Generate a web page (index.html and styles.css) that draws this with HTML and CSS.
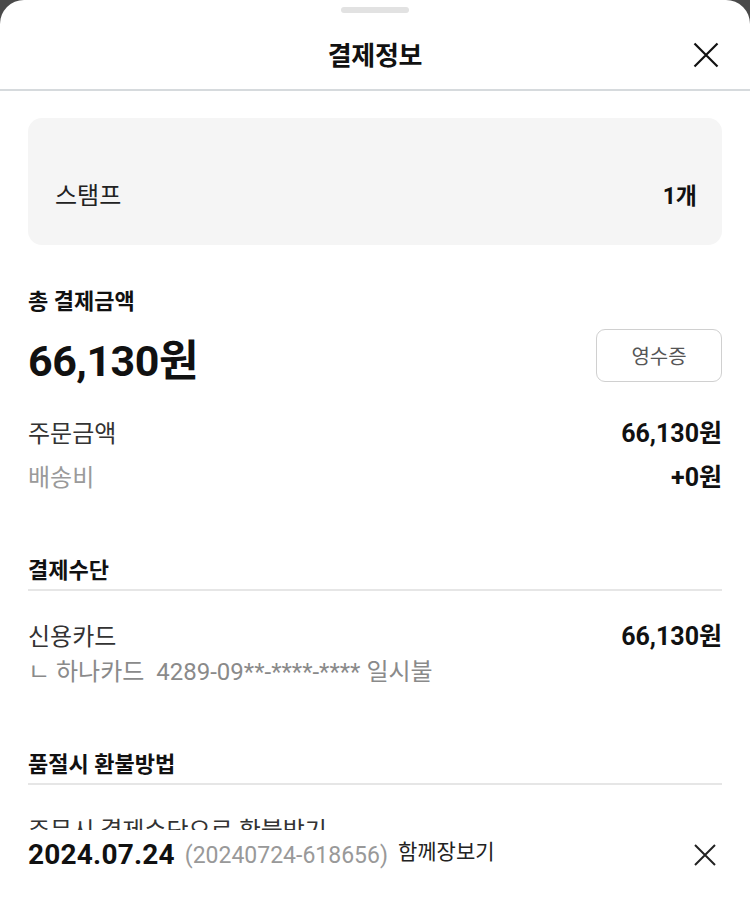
FILE: index.html
```html
<!DOCTYPE html>
<html lang="ko">
<head>
<meta charset="utf-8">
<title>결제정보</title>
<link rel="stylesheet" href="styles.css">
</head>
<body>
<div class="sheet">
  <div class="handle"></div>
  <header class="head">
    <h1 class="title">결제정보</h1>
    <button class="close" aria-label="닫기">
      <svg width="26" height="26" viewBox="0 0 26 26"><path d="M1.5 1.5 L24.5 24.5 M24.5 1.5 L1.5 24.5" stroke="#111" stroke-width="2.2" fill="none"/></svg>
    </button>
  </header>
  <main class="content">
    <div class="stamp">
      <span class="stamp-label">스탬프</span>
      <span class="stamp-value">1개</span>
    </div>

    <div class="total-label">총 결제금액</div>
    <div class="total-row">
      <span class="total-amount">66,130원</span>
      <button class="receipt">영수증</button>
    </div>

    <div class="row row-first">
      <span class="label">주문금액</span>
      <span class="value">66,130원</span>
    </div>
    <div class="row row-next">
      <span class="label muted">배송비</span>
      <span class="value">+0원</span>
    </div>

    <div class="section-title">결제수단</div>
    <div class="row row-section">
      <span class="label">신용카드</span>
      <span class="value">66,130원</span>
    </div>
    <div class="card-line">ㄴ 하나카드&nbsp; 4289-09**-****-**** 일시불</div>

    <div class="section-title">품절시 환불방법</div>
    <div class="row row-section">
      <span class="label">주문시 결제수단으로 환불받기</span>
    </div>
  </main>
  <footer class="foot">
    <div class="foot-text">
      <span class="foot-date">2024.07.24</span>
      <span class="foot-no">(20240724-618656)</span>
      <span class="foot-tag">함께장보기</span>
    </div>
    <button class="foot-close" aria-label="닫기">
      <svg width="24" height="24" viewBox="0 0 24 24"><path d="M2 2 L22 22 M22 2 L2 22" stroke="#222" stroke-width="2" fill="none"/></svg>
    </button>
  </footer>
</div>
</body>
</html>
```

FILE: styles.css
```css
* { box-sizing: border-box; }
html, body { margin: 0; padding: 0; }
body {
  background: #4a4a4a;
  font-family: Roboto, "Noto Sans CJK KR", "Noto Sans", sans-serif;
  color: #111;
}
.sheet {
  width: 750px;
  height: 921px;
  background: #fff;
  border-radius: 24px 24px 0 0;
  overflow: hidden;
  display: flex;
  flex-direction: column;
}
.handle {
  flex: none;
  width: 68px;
  height: 6px;
  border-radius: 3px;
  background: #e2e2e2;
  margin: 7px auto 0;
}
.head {
  flex: none;
  position: relative;
  height: 78px;
  border-bottom: 2px solid #d6dadd;
  display: flex;
  align-items: center;
  justify-content: center;
}
.title {
  margin: 9px 0 0;
  font-size: 26px;
  font-weight: 700;
  line-height: 32px;
  letter-spacing: -0.3px;
}
.close {
  position: absolute;
  right: 31px;
  top: 29px;
  border: 0;
  background: none;
  padding: 0;
  width: 26px;
  height: 26px;
}
.close svg, .foot-close svg { display: block; }
.content {
  flex: 1;
  min-height: 0;
  overflow: hidden;
  padding: 27px 28px 0;
}
.stamp {
  height: 127px;
  background: #f5f5f5;
  border-radius: 14px;
  display: flex;
  align-items: center;
  justify-content: space-between;
  padding: 24px 25px 0 27px;
  font-size: 24px;
}
.stamp-label { color: #222; }
.stamp-value { font-weight: 700; font-size: 23px; }
.total-label {
  margin-top: 43px;
  font-size: 22px;
  line-height: 28px;
  font-weight: 700;
}
.total-row {
  margin-top: 13px;
  display: flex;
  align-items: center;
  justify-content: space-between;
  height: 53px;
}
.total-amount {
  font-size: 43px;
  font-weight: 700;
  letter-spacing: -0.5px;
  margin-top: 2px;
}
.receipt {
  width: 126px;
  height: 53px;
  border: 1.5px solid #d0d0d0;
  border-radius: 9px;
  background: #fff;
  font-family: inherit;
  font-size: 20px;
  color: #555;
}
.row {
  display: flex;
  justify-content: space-between;
  align-items: center;
  height: 32px;
  font-size: 24px;
}
.row-first { margin-top: 33px; }
.row-next { margin-top: 12px; }
.row-section { margin-top: 27px; }
.label { color: #333; }
.muted { color: #9a9a9a; }
.value { font-weight: 700; color: #111; font-size: 25px; }
.section-title {
  margin-top: 66px;
  font-size: 22px;
  line-height: 28px;
  font-weight: 700;
  padding-bottom: 4px;
  border-bottom: 2px solid #e6e6e6;
}
.card-line + .section-title { margin-top: 63px; }
.card-line {
  margin-top: 6px;
  line-height: 32px;
  font-size: 24px;
  color: #8a8a8a;
}
.foot {
  flex: none;
  height: 91px;
  background: #fff;
  display: flex;
  justify-content: space-between;
  align-items: flex-start;
  padding: 8px 33px 0 28px;
}
.foot-text {
  display: flex;
  align-items: flex-start;
}
.foot-date {
  font-size: 28px;
  font-weight: 700;
  line-height: 34px;
  letter-spacing: 0.2px;
}
.foot-no {
  font-size: 23px;
  color: #999;
  line-height: 34px;
  margin-left: 10px;
  margin-top: 1px;
}
.foot-tag {
  font-size: 21px;
  color: #222;
  line-height: 28px;
  margin-left: 10px;
}
.foot-close {
  border: 0;
  background: none;
  padding: 0;
  margin-top: 5px;
}
```
